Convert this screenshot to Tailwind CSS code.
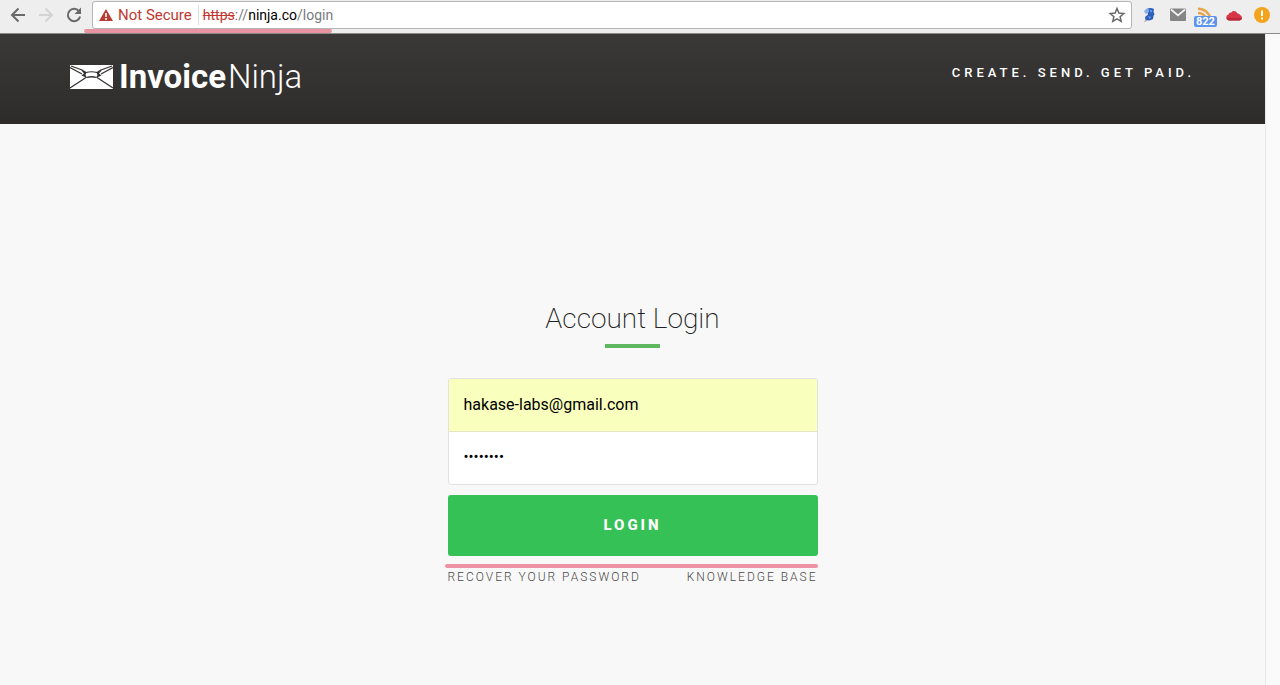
<!DOCTYPE html>
<html lang="en">
<head>
    <meta charset="UTF-8">
    <meta name="viewport" content="width=device-width, initial-scale=1.0">
    <title>Invoice Ninja | Account Login</title>
    <script src="https://cdn.jsdelivr.net/npm/@tailwindcss/browser@4"></script>
</head>
<body class="min-h-screen flex flex-col overflow-hidden bg-[#f8f8f8] font-['Roboto',sans-serif]">

    <!-- Browser toolbar -->
    <div class="relative z-10 flex h-[34px] shrink-0 items-start border-b border-[#8a8a8a] bg-[#eeeeee] pt-px">
        <div class="flex h-7 w-[92px] shrink-0 items-center gap-2 pl-2">
            <button type="button" aria-label="Back" class="size-5">
                <svg viewBox="0 0 20 20" class="size-5" fill="none" stroke="#6a6a6a" stroke-width="2"><path d="M17 10H4M10.500 3.500 4 10l6.500 6.500"/></svg>
            </button>
            <button type="button" aria-label="Forward" class="size-5">
                <svg viewBox="0 0 20 20" class="size-5" fill="none" stroke="#d4d4d4" stroke-width="2"><path d="M3 10h13M9.500 3.500 16 10l-6.500 6.500"/></svg>
            </button>
            <button type="button" aria-label="Reload" class="size-5">
                <svg viewBox="0 0 20 20" class="size-5" fill="none"><path d="M15 6.200A6.200 6.200 0 1 0 16.100 11.500" stroke="#6a6a6a" stroke-width="2"/><path d="M17 2.500V9h-6.500z" fill="#6a6a6a"/></svg>
            </button>
        </div>

        <div class="flex h-7 flex-1 items-center rounded-[3px] border border-[#b4b4b4] bg-white pl-1 pr-1">
            <svg viewBox="0 0 16 16" class="ml-px size-4" fill="none"><path d="M8 2 15 14H1z" fill="#b93c32"/><path d="M8 6v4M8 11v2" stroke="#fff" stroke-width="1.600"/></svg>
            <span class="ml-1 text-[15px] text-[#bf3730]">Not Secure</span>
            <span class="ml-1.5 mr-1 h-5 w-px bg-[#dedede]"></span>
            <span class="flex-1 text-[14px] text-[#7b7b80]"><span class="text-[#bf3730] line-through">https</span>://<span class="text-black">ninja.co</span>/login</span>
            <button type="button" aria-label="Bookmark this page" class="size-5">
                <svg viewBox="0 0 20 20" class="size-5" fill="none" stroke="#6a6a6a" stroke-width="1.500"><path d="M10 3.500l1.900 4.600 4.900.4-3.700 3.200 1.100 4.800-4.200-2.600-4.200 2.600 1.100-4.800-3.700-3.200 4.900-.4z"/></svg>
            </button>
        </div>

        <!-- Extensions -->
        <div class="flex h-7 shrink-0 items-center gap-2 pl-2 pr-2">
            <svg viewBox="0 0 20 20" class="size-5"><path d="M6 13 4 17.500 9 14.500z" fill="#a4a9b4"/><path d="M6.500 4Q10.500 2 14 4L13.500 7 14.500 9 13.500 11 13 14Q9.500 16.500 5.500 14.500L5 12 8 9.500z" fill="#2c5fbb"/><path d="M4 6.500Q5 3.500 8.500 3.500L9 7 6 9z" fill="#86b1e8"/><path d="M9.500 4.500 12.500 5.500 11 8zM8 11l3 1-1.500 2z" fill="#6b9cf0"/></svg>
            <svg viewBox="0 0 20 20" class="size-5"><rect x="2" y="3.500" width="16" height="12.500" rx="1" fill="#858585"/><path d="M3 4.500l7 6 7-6" fill="none" stroke="#f4f4f4" stroke-width="1.700"/></svg>
            <div class="relative size-5">
                <svg viewBox="0 0 20 20" class="size-5" fill="none" stroke="#e9a44c" stroke-width="2.400"><path d="M2 3.700C8.500 3.700 13.500 8 14.500 14M2 8C6 8 9 10.500 10 14"/></svg>
                <span class="absolute -left-0.5 top-[11px] rounded-xs bg-[#5d94ee] px-[2px] text-[11px] leading-[11px] font-bold text-white">822</span>
            </div>
            <svg viewBox="0 0 20 20" class="size-5"><path d="M5 15.500a3 3 0 0 1-.5-5.900C5 7.500 7 7.800 7.300 7.600 8 5.500 12 5 13.500 8.500 15 8.300 15.700 9.200 16 9.900a2.900 2.900 0 0 1-.5 5.600z" fill="#d73545"/><path d="M2.500 13h15.500a3 3 0 0 1-2.500 2.500H5A3 3 0 0 1 2.500 13z" fill="#b9283b"/></svg>
            <svg viewBox="0 0 20 20" class="size-5"><circle cx="10" cy="10" r="8" fill="#f2a41c"/><path d="M10 5.500V11M10 12.500v2" stroke="#fff" stroke-width="2"/></svg>
        </div>

        <!-- Marker line under the address -->
        <div class="absolute left-[84px] top-[29px] h-1 w-[248px] rounded-full bg-[#ea94a3]"></div>
    </div>

    <div class="flex flex-1">
        <div class="flex flex-1 flex-col">
            <header class="flex h-[90px] items-start justify-between bg-linear-to-b from-[#3b3838] to-[#2e2b2b] px-[70px] text-white">
                <a href="#" class="flex items-center gap-1.5 pt-6">
                    <svg viewBox="0 0 43 24" class="h-6 w-[43px]" fill="none">
                        <rect width="43" height="24" rx="0.500" fill="#fff"/>
                        <path d="M0 2.500 12 9M31 9 43 2.500" stroke="#353232" stroke-width="1.300"/>
                        <path d="M1 1 12 5 16 7.500Q21.500 6 27 7.500L31 5 42 1" stroke="#353232" stroke-width="1.200"/>
                        <path d="M11 5 16.500 7.500 15.500 10 17 13 11.500 10.500 14 8.500zM32 5 26.500 7.500 27.500 10 26 13 31.500 10.500 29 8.500z" fill="#353232"/>
                        <path d="M16.500 12.500Q21.500 11 26.500 12.500" stroke="#353232" stroke-width="1.300"/>
                        <path d="M0 23 16 12.500M43 23 27 12.500" stroke="#353232" stroke-width="1.300"/>
                    </svg>
                    <span class="flex gap-0.5 text-[33px] leading-[38px]"><span class="font-bold">Invoice</span><span class="font-light">Ninja</span></span>
                </a>
                <p class="pt-7 text-[13px] leading-[22px] font-medium tracking-[4px]">CREATE. SEND. GET PAID.</p>
            </header>

            <main class="flex flex-1 flex-col items-center pt-[174px]">
                <form class="flex w-[370px] flex-col">
                    <h1 class="text-center text-[28px] leading-[42px] font-extralight text-[#222222]">Account Login</h1>
                    <div class="mx-auto mt-1 h-1 w-[55px] bg-[#5fb760]"></div>

                    <div class="mt-[30px] overflow-hidden rounded-[3px] border border-[#e2e2e2] bg-white text-black">
                        <input type="email" aria-label="Email address" value="hakase-labs@gmail.com" class="block h-[53px] w-full border-b border-[#e3e6c4] bg-[#f9ffbd] px-[15px] pb-0.5 text-[16px] outline-none">
                        <input type="password" aria-label="Password" value="password" class="block h-[52px] w-full px-[15px] pb-0.5 text-[15px] outline-none">
                    </div>

                    <button type="submit" class="mt-2.5 h-[61px] rounded-[3px] bg-[#36c157] text-[15px] font-extrabold tracking-[3px] text-white">LOGIN</button>

                    <!-- Marker line above the links -->
                    <div class="relative mt-2 -ml-[3px] h-1 rounded-full bg-[#ed93a3]"></div>

                    <div class="flex justify-between text-[12px] leading-[18px] font-light tracking-[2px] text-[#4a4a4a]">
                        <a href="#">RECOVER YOUR PASSWORD</a>
                        <a href="#">KNOWLEDGE BASE</a>
                    </div>
                </form>
            </main>
        </div>

        <!-- Scrollbar track -->
        <div class="w-[15px] shrink-0 border-l border-[#e8e8e8] bg-[#fafafa]"></div>
    </div>

</body>
</html>
